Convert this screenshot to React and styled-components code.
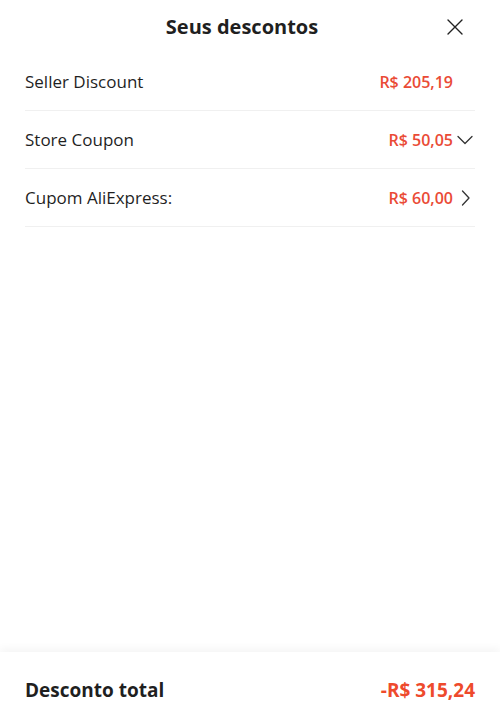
import React from 'react';
import styled, { createGlobalStyle } from 'styled-components';

const GlobalStyle = createGlobalStyle`
    html, body {
        margin: 0;
        padding: 0;
        background: #ffffff;
    }
    body {
        font-family: "Open Sans", "Noto Sans", sans-serif;
        color: #222222;
    }
`;

const Sheet = styled.div`
    height: 727px;
    display: flex;
    flex-direction: column;
    background: #ffffff;
`;

const Header = styled.header`
    height: 53px;
    padding-right: 16px;
    display: flex;
    align-items: center;
    justify-content: center;
    position: relative;
`;

const Title = styled.h2`
    margin: 0;
    font-size: 20px;
    font-weight: 700;
    color: #1f1f1f;
`;

const CloseButton = styled.button`
    position: absolute;
    right: 36px;
    top: 18px;
    width: 18px;
    height: 18px;
    padding: 0;
    border: none;
    background: none;
    cursor: pointer;
    display: flex;
`;

const List = styled.div`
    flex: 1;
    padding: 0 25px;
`;

const Row = styled.div`
    height: 57px;
    display: flex;
    align-items: center;
    justify-content: space-between;
    border-bottom: 1px solid #f0f0f0;
`;

const Label = styled.span`
    font-size: 17px;
    color: #1f1f1f;
`;

const Value = styled.div`
    display: flex;
    align-items: center;
`;

const Amount = styled.span`
    font-size: 16px;
    font-weight: 600;
    color: #ea4b36;
`;

const IconSlot = styled.span`
    width: 20px;
    height: 16px;
    margin-left: 2px;
    display: flex;
    align-items: center;
    justify-content: center;
`;

const Footer = styled.footer`
    height: 75px;
    padding: 0 25px;
    display: flex;
    align-items: center;
    justify-content: space-between;
    box-shadow: 0 -4px 8px rgba(0, 0, 0, 0.04);
`;

const TotalLabel = styled.span`
    font-size: 19px;
    font-weight: 700;
    color: #1f1f1f;
`;

const TotalAmount = styled.span`
    font-size: 19px;
    font-weight: 700;
    color: #ee4a2c;
`;

const CloseIcon = () => (
    <svg width="18" height="18" viewBox="0 0 18 18" fill="none" stroke="#222" strokeWidth="1.4" strokeLinecap="round">
        <path d="M2 2L16 16M16 2L2 16" />
    </svg>
);

const ChevronDown = () => (
    <svg width="16" height="10" viewBox="0 0 16 10" fill="none" stroke="#333" strokeWidth="1.3" strokeLinecap="round" strokeLinejoin="round">
        <path d="M1 1.5L8 8.5L15 1.5" />
    </svg>
);

const ChevronRight = () => (
    <svg width="9" height="16" viewBox="0 0 9 16" fill="none" stroke="#333" strokeWidth="1.3" strokeLinecap="round" strokeLinejoin="round">
        <path d="M1.5 1L8 8L1.5 15" />
    </svg>
);

const discounts = [
    { label: 'Seller Discount', amount: 'R$ 205,19', icon: null },
    { label: 'Store Coupon', amount: 'R$ 50,05', icon: <ChevronDown /> },
    { label: 'Cupom AliExpress:', amount: 'R$ 60,00', icon: <ChevronRight /> },
];

export default function App() {
    return (
        <Sheet>
            <GlobalStyle />
            <Header>
                <Title>Seus descontos</Title>
                <CloseButton aria-label="Fechar">
                    <CloseIcon />
                </CloseButton>
            </Header>
            <List>
                {discounts.map(item => (
                    <Row key={item.label}>
                        <Label>{item.label}</Label>
                        <Value>
                            <Amount>{item.amount}</Amount>
                            <IconSlot>{item.icon}</IconSlot>
                        </Value>
                    </Row>
                ))}
            </List>
            <Footer>
                <TotalLabel>Desconto total</TotalLabel>
                <TotalAmount>-R$ 315,24</TotalAmount>
            </Footer>
        </Sheet>
    );
}
